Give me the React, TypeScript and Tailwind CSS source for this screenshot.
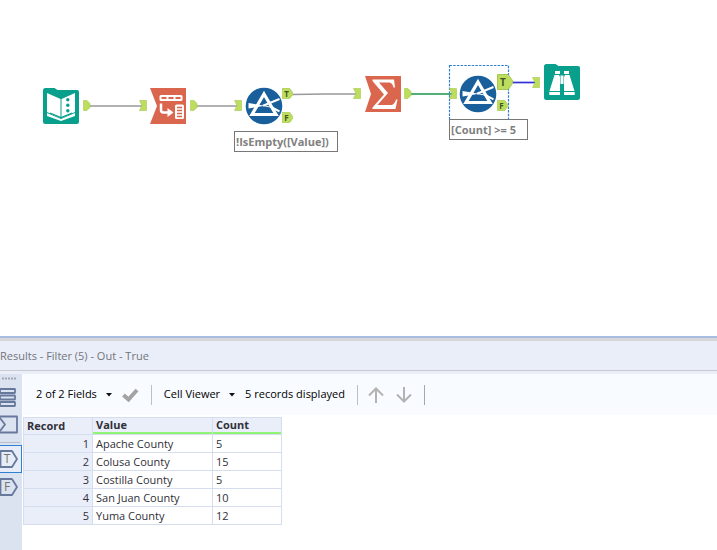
import type { ReactNode } from 'react'

interface CountyRow {
  value: string
  count: number
}

const ROWS: CountyRow[] = [
  { value: 'Apache County', count: 5 },
  { value: 'Colusa County', count: 15 },
  { value: 'Costilla County', count: 5 },
  { value: 'San Juan County', count: 10 },
  { value: 'Yuma County', count: 12 },
]

function Folder({ children }: { children: ReactNode }) {
  return (
    <svg width="38" height="38" viewBox="0 0 38 38" fill="none">
      <path d="M3.500 1h9l3 2H35a2 2 0 0 1 2 2v29.500a2.500 2.500 0 0 1-2.500 2.500h-31A2.500 2.500 0 0 1 1 34.500v-31A2.500 2.500 0 0 1 3.500 1Z" fill="#089f8c" />
      {children}
    </svg>
  )
}

function InputDataIcon() {
  return (
    <Folder>
      <path d="M5 6l13.500 6V31L5 25ZM33 6l-13.500 6V31L33 25Z" fill="#fff" />
      <path d="M5 26v3l14 5 14-5v-3l-14 6Z" fill="#fff" />
      <path d="M8 26l11 4.500L30 26" stroke="#089f8c" strokeWidth="1.200" />
      <circle cx="25.800" cy="12.800" r="1.700" fill="#089f8c" />
      <circle cx="25.800" cy="18.300" r="1.700" fill="#089f8c" />
      <circle cx="25.800" cy="23.800" r="1.700" fill="#089f8c" />
    </Folder>
  )
}

function BrowseIcon() {
  return (
    <Folder>
      <path d="M12 8h5v3h-5zM21 8h5v3h-5z" fill="#fff" />
      <path d="M11.500 12H16l1 2v14H6.500zM22 12h4.500l5 16H21V14z" fill="#fff" />
      <path d="M17.500 12.500h3V21h-3z" fill="#fff" />
      <path d="M6.300 29H17v3H6.300zM21 29h10.700v3H21z" fill="#fff" />
    </Folder>
  )
}

function TransposeIcon() {
  return (
    <svg width="38" height="38" viewBox="0 0 38 38" fill="none">
      <path d="M1 1h36v36H1l7-18Z" fill="#d9664d" />
      <rect x="10.500" y="8" width="23" height="6" rx="1.500" fill="#fff" />
      <path d="M12.500 11h5M19.500 11h5M26.500 11h5" stroke="#d9664d" strokeWidth="1.800" />
      <path d="M12 16.500V23a2.500 2.500 0 0 0 2.500 2.500H20" stroke="#fff" strokeWidth="2.500" />
      <path d="M18.500 21l6 4.500-6 4.500z" fill="#fff" />
      <rect x="26" y="17.500" width="9" height="14.500" rx="1.500" fill="#fff" />
      <path d="M28 20.500h5M28 23.500h5M28 26.500h5M28 29.500h5" stroke="#d9664d" strokeWidth="1.500" />
    </svg>
  )
}

function SummarizeIcon() {
  return (
    <svg width="38" height="38" viewBox="0 0 38 38" fill="none">
      <path d="M1 1h36v36H1l6-18Z" fill="#d9664d" />
      <path d="M8.500 4.500H30l1 8h-1.500c-.8-3.500-2-5-5.500-5H15l9 10.500L13.500 30H26c3.500 0 5-2 6-5.500h1.500L31.500 34h-23v-1.500L20 19.500 8.500 6Z" fill="#fff" />
    </svg>
  )
}

// prism with the beam entering left and splitting right
function FilterIcon() {
  return (
    <svg width="38" height="38" viewBox="0 0 38 38" fill="none">
      <circle cx="19" cy="19" r="18.300" fill="#185f9b" />
      <path d="M19 7L31 27.500H7Z" stroke="#fff" strokeWidth="3.200" />
      <path d="M3.500 16L20 18.700 3.500 21.500Z" fill="#fff" />
      <path d="M18 18.700L34.500 12M27 20.500l7.500 3.800" stroke="#fff" strokeWidth="2" />
      <path d="M19 18.700l7 1.500" stroke="#fff" strokeWidth="1" />
    </svg>
  )
}

function InAnchor() {
  return (
    <svg width="8" height="11" viewBox="0 0 8 11">
      <path d="M.5.500h7v10h-7l2.500-5Z" fill="#bddd5e" stroke="#a6c84e" strokeWidth=".6" />
    </svg>
  )
}

function OutAnchor() {
  return (
    <svg width="8" height="11" viewBox="0 0 8 11">
      <path d="M.5.500H4l3 3v4l-3 3H.5Z" fill="#bddd5e" stroke="#a6c84e" strokeWidth=".6" />
    </svg>
  )
}

function LetterAnchor({ letter, large = false }: { letter: string; large?: boolean }) {
  return (
    <span
      className={
        large
          ? 'relative flex h-4 w-4 items-center justify-center pr-1 text-[10px] leading-none font-bold text-[#3f5420]'
          : 'relative flex h-[11px] w-[11px] items-center justify-center pr-0.5 text-[8px] leading-none font-bold text-[#3f5420]'
      }
    >
      <svg className="absolute inset-0 h-full w-full" viewBox="0 0 16 16">
        <path d="M.5.500H11l4.500 6v3l-4.500 6H.5Z" fill="#bddd5e" stroke="#a6c84e" />
      </svg>
      <span className="relative">{letter}</span>
    </span>
  )
}

function Wires() {
  return (
    <svg className="absolute top-0 left-0" width="717" height="336" fill="none">
      <g stroke="#999" strokeWidth="1.400">
        <path d="M89 106h54M196 106h42M292 94.500l33-.5h32" />
      </g>
      <path d="M411 94h43" stroke="#159447" strokeWidth="1.700" />
      <path d="M512 82.500h24" stroke="#3030dc" strokeWidth="1.700" />
      <rect x="449.500" y="65.500" width="59" height="55" stroke="#2f7fd0" strokeWidth="1.200" strokeDasharray="2.500 1.200" />
    </svg>
  )
}

function Workflow() {
  return (
    <main className="relative overflow-hidden bg-white">
      <Wires />

      <div className="absolute top-[87px] left-[42px]"><InputDataIcon /></div>
      <div className="absolute top-[87px] left-[149px]"><TransposeIcon /></div>
      <div className="absolute top-[87px] left-[245px]"><FilterIcon /></div>
      <div className="absolute top-[75px] left-[364px]"><SummarizeIcon /></div>
      <div className="absolute top-[75px] left-[459px]"><FilterIcon /></div>
      <div className="absolute top-[63px] left-[543px]"><BrowseIcon /></div>

      <div className="absolute top-[100px] left-[83px]"><OutAnchor /></div>
      <div className="absolute top-[100px] left-[139px]"><InAnchor /></div>
      <div className="absolute top-[100px] left-[190px]"><OutAnchor /></div>
      <div className="absolute top-[100px] left-[234px]"><InAnchor /></div>
      <div className="absolute top-[88px] left-[282px]"><LetterAnchor letter="T" /></div>
      <div className="absolute top-[112px] left-[282px]"><LetterAnchor letter="F" /></div>
      <div className="absolute top-[88px] left-[353px]"><InAnchor /></div>
      <div className="absolute top-[88px] left-[404px]"><OutAnchor /></div>
      <div className="absolute top-[88px] left-[449px]"><InAnchor /></div>
      <div className="absolute top-[74px] left-[497px]"><LetterAnchor letter="T" large /></div>
      <div className="absolute top-[100px] left-[497px]"><LetterAnchor letter="F" /></div>
      <div className="absolute top-[77px] left-[532px]"><InAnchor /></div>

      <div className="absolute top-[131px] left-[234px] h-[21px] w-[104px] border border-[#777] bg-white pl-px text-[11px] leading-[19px] font-bold whitespace-nowrap text-[#808080]">
        !IsEmpty([Value])
      </div>
      <div className="absolute top-[119px] left-[449px] h-[21px] w-[79px] border border-[#777] bg-white pl-px text-[11px] leading-[19px] font-bold whitespace-nowrap text-[#808080]">
        [Count] &gt;= 5
      </div>
    </main>
  )
}

function TagIcon({ letter }: { letter: string }) {
  return (
    <span className="relative flex h-[18px] w-[18px] items-center justify-center pr-1 text-[12px] leading-none text-[#76746f]">
      <svg className="absolute inset-0" width="18" height="18" fill="none">
        <path d="M.5 1H12l5 8-5 8H.5Z" stroke="#66799d" strokeWidth="1.800" strokeLinejoin="round" />
      </svg>
      <span className="relative">{letter}</span>
    </span>
  )
}

function SideRail() {
  return (
    <nav aria-label="Results views" className="flex w-[22px] shrink-0 flex-col items-start bg-[#dce3f0] pt-0.5">
      <svg width="17" height="5">
        <path d="M2 2.500h15" stroke="#a3a8b2" strokeWidth="2" strokeDasharray="2 1" />
      </svg>
      <button type="button" aria-label="Messages" className="mt-1.5">
        <svg width="18" height="20" fill="none" stroke="#66799d" strokeWidth="1.800">
          <rect x="0" y="2" width="15" height="4" rx=".5" />
          <rect x="0" y="8.500" width="15" height="4" rx=".5" />
          <rect x="0" y="15" width="15" height="4" rx=".5" />
        </svg>
      </button>
      <button type="button" aria-label="Input" className="mt-2">
        <svg width="18" height="19" fill="none" stroke="#66799d" strokeWidth="1.800" strokeLinejoin="round">
          <path d="M-1 1.500h18v16H-1M0 3l5 6.500L0 16" />
        </svg>
      </button>
      <div className="mt-2 h-px w-5 bg-[#b9bec8]" />
      <button type="button" aria-label="True" className="mt-0.5 flex h-7 w-[22px] items-center border border-l-0 border-[#2f80d0] bg-[#e6edf8]">
        <TagIcon letter="T" />
      </button>
      <button type="button" aria-label="False" className="flex h-7 items-center">
        <TagIcon letter="F" />
      </button>
    </nav>
  )
}

function Caret() {
  return (
    <svg width="6" height="4">
      <path d="M0 0h6L3 3.500Z" fill="#111" />
    </svg>
  )
}

function Arrow({ down = false }: { down?: boolean }) {
  return (
    <svg width="16" height="16" fill="none" stroke="#b3b3b3" strokeWidth="2" className={down ? 'rotate-180' : ''}>
      <path d="M8 16V2M1 8.500L8 1.500l7 7" />
    </svg>
  )
}

function Toolbar() {
  return (
    <div className="flex h-[41px] items-center bg-[#f8fbff] pl-[13px] text-[11px] whitespace-nowrap text-[#000]">
      <button type="button" className="flex items-center gap-[9px]">
        2 of 2 Fields
        <Caret />
      </button>
      <button type="button" aria-label="Apply" className="ml-2.5">
        <svg width="17" height="14" fill="none">
          <path d="M1.500 7l5 4.500L15 2" stroke="#a3a3a3" strokeWidth="4" />
        </svg>
      </button>
      <div className="ml-3 h-5 w-px bg-[#c0c0c0]" />
      <button type="button" className="ml-3 flex items-center gap-[9px]">
        Cell Viewer
        <Caret />
      </button>
      <span className="ml-2.5">5 records displayed</span>
      <div className="ml-3 h-5 w-px bg-[#c0c0c0]" />
      <button type="button" aria-label="Previous" className="ml-2.5"><Arrow /></button>
      <button type="button" aria-label="Next" className="ml-3"><Arrow down /></button>
      <div className="ml-3 h-5 w-px bg-[#a8a8a8]" />
    </div>
  )
}

function ResultsTable() {
  return (
    <table className="mt-0.5 w-[259px] table-fixed border-collapse text-left text-[11px] leading-4 text-[#303038]">
      <thead>
        <tr className="bg-[#e9eef9]">
          <th className="w-[69px] border border-[#d5deee] px-[3px] py-0 leading-[14px]">Record</th>
          <th className="w-[120px] border border-[#d5deee] p-0">
            <div className="border-b-2 border-[#8ff573] px-[3px] leading-[14px]">Value</div>
          </th>
          <th className="border border-[#d5deee] p-0">
            <div className="border-b-2 border-[#8ff573] px-[3px] leading-[14px]">Count</div>
          </th>
        </tr>
      </thead>
      <tbody>
        {ROWS.map((row, i) => (
          <tr key={row.value} className="h-[18px]">
            <td className="border border-[#d5deee] bg-[#e9eef9] px-[3px] py-0 text-right">{i + 1}</td>
            <td className="border border-[#d5deee] px-[3px] py-0">{row.value}</td>
            <td className="border border-[#d5deee] px-[3px] py-0">{row.count}</td>
          </tr>
        ))}
      </tbody>
    </table>
  )
}

function Results() {
  return (
    <section className="flex flex-col border-t-2 border-[#a9bde2] bg-white">
      <header className="h-[33px] border-t-[3px] border-b border-t-[#d5d6da] border-b-[#c8cad0] bg-[#e9eef9] text-[11px] leading-[29px] text-[#74747a]">
        Results - Filter (5) - Out - True
      </header>
      <div className="flex flex-1 border-t-[3px] border-[#e9eef9]">
        <SideRail />
        <div className="min-w-0 flex-1 pl-px">
          <Toolbar />
          <ResultsTable />
        </div>
      </div>
    </section>
  )
}

export default function App() {
  return (
    <div className="grid min-h-screen grid-rows-[336fr_214fr] font-['Open_Sans','Noto_Sans',sans-serif]">
      <Workflow />
      <Results />
    </div>
  )
}
